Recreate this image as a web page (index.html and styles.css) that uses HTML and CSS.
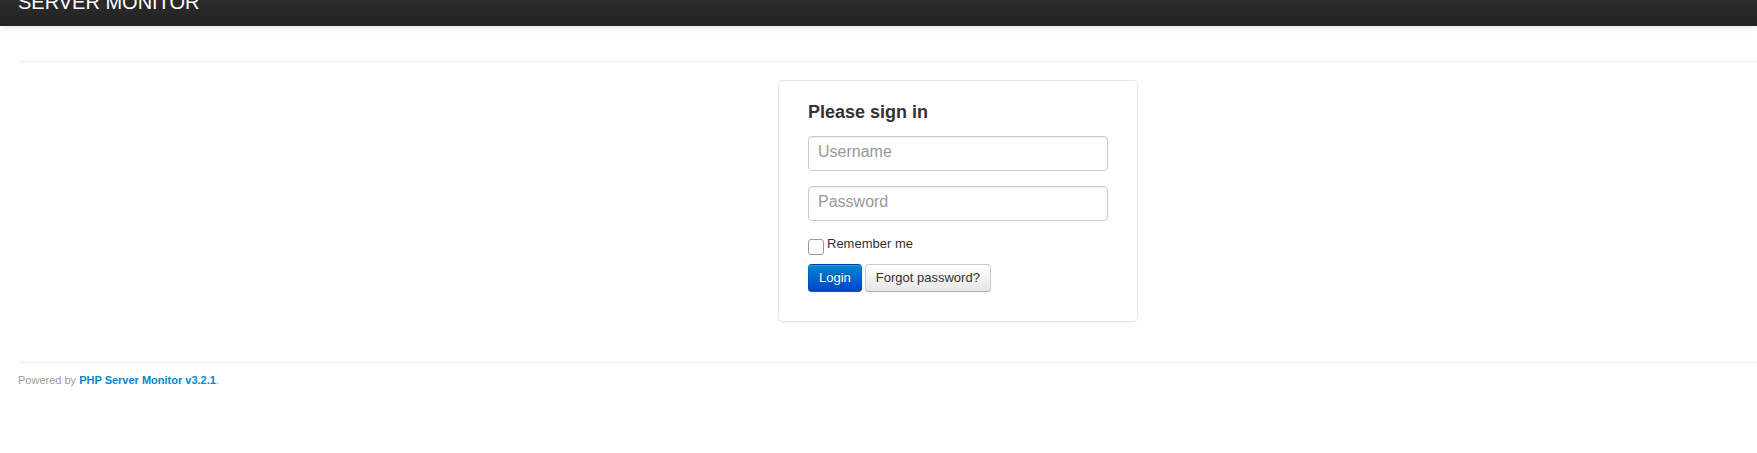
FILE: index.html
```html
<!DOCTYPE html>
<html lang="en">
<head>
<meta charset="utf-8">
<title>Server Monitor</title>
<link rel="stylesheet" href="styles.css">
</head>
<body>
<div class="navbar">
  <span class="brand">SERVER MONITOR</span>
</div>
<div class="page">
  <hr class="rule rule-top">
  <form class="signin">
    <h2 class="signin-heading">Please sign in</h2>
    <input class="field" type="text" placeholder="Username">
    <input class="field" type="password" placeholder="Password">
    <label class="remember"><input class="check" type="checkbox"><span>Remember me</span></label>
    <div class="actions">
      <button class="btn btn-primary" type="button">Login</button>
      <button class="btn" type="button">Forgot password?</button>
    </div>
  </form>
  <hr class="rule rule-bottom">
  <p class="footer">Powered by <a href="#">PHP Server Monitor v3.2.1</a>.</p>
</div>
</body>
</html>
```

FILE: styles.css
```css
html, body {
  margin: 0;
  padding: 0;
  background: #fff;
}
body {
  font-family: "Liberation Sans", Arial, sans-serif;
  color: #333;
  font-size: 14px;
}
.navbar {
  height: 26px;
  overflow: hidden;
  background: linear-gradient(to bottom, #2c2c2c, #222);
  box-shadow: 0 1px 8px rgba(0, 0, 0, 0.12);
  position: relative;
  z-index: 1;
}
.brand {
  display: block;
  margin: -8px 0 0 18px;
  font-size: 20px;
  line-height: 20px;
  color: #fff;
}
.page {
  padding-left: 18px;
}
.rule {
  margin: 0;
  border: 0;
  border-top: 1px solid #eee;
  height: 0;
}
.rule-top {
  margin-top: 35px;
}
.signin {
  box-sizing: border-box;
  width: 360px;
  margin: 18px 0 0 760px;
  padding: 19px 29px 29px;
  border: 1px solid #e5e5e5;
  border-radius: 5px;
  box-shadow: 0 1px 2px rgba(0, 0, 0, 0.05);
  display: flex;
  flex-direction: column;
}
.signin-heading {
  margin: 0 0 12px;
  font-size: 18px;
  line-height: 24px;
  font-weight: bold;
  color: #333;
}
.field {
  box-sizing: border-box;
  width: 300px;
  height: 35px;
  margin: 0 0 15px;
  padding: 0 9px 4px;
  font-family: "Liberation Sans", Arial, sans-serif;
  font-size: 16px;
  color: #555;
  border: 1px solid #ccc;
  border-radius: 4px;
  box-shadow: inset 0 1px 1px rgba(0, 0, 0, 0.075);
  outline: none;
}
.field::placeholder {
  color: #999;
}
.remember {
  display: flex;
  align-items: flex-start;
  font-size: 13px;
  line-height: 15px;
  color: #333;
  margin-bottom: 9px;
}
.check {
  appearance: none;
  -webkit-appearance: none;
  box-sizing: border-box;
  width: 16px;
  height: 16px;
  margin: 3px 3px 0 0;
  border: 1px solid #999;
  border-radius: 3px;
  background: #fff;
  flex: none;
}
.actions {
  display: flex;
  gap: 3px;
}
.btn {
  box-sizing: border-box;
  height: 28px;
  padding: 0 10px;
  font-family: "Liberation Sans", Arial, sans-serif;
  font-size: 13px;
  line-height: 26px;
  color: #333;
  background: linear-gradient(to bottom, #fff, #e6e6e6);
  border: 1px solid #ccc;
  border-bottom-color: #b3b3b3;
  border-radius: 4px;
  box-shadow: inset 0 1px 0 rgba(255, 255, 255, 0.2), 0 1px 2px rgba(0, 0, 0, 0.05);
  cursor: pointer;
}
.btn-primary {
  color: #fff;
  background: linear-gradient(to bottom, #0088cc, #0044cc);
  border-color: rgba(0, 0, 0, 0.1) rgba(0, 0, 0, 0.1) rgba(0, 0, 0, 0.25);
  text-shadow: 0 -1px 0 rgba(0, 0, 0, 0.25);
}
.rule-bottom {
  margin-top: 40px;
}
.footer {
  margin: 8px 0 0;
  font-size: 11px;
  line-height: 18px;
  color: #999;
}
.footer a {
  color: #0088cc;
  font-weight: bold;
  text-decoration: none;
}
```
